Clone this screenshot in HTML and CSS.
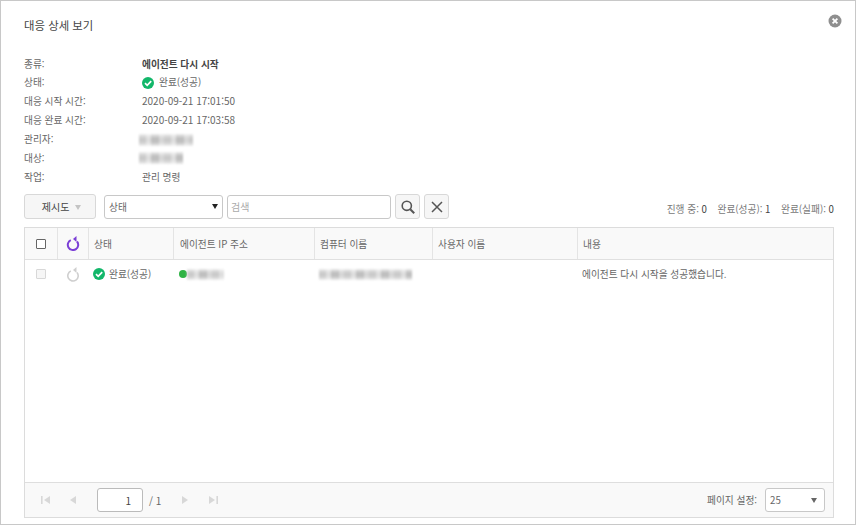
FILE: index.html
```html
<!DOCTYPE html>
<html lang="ko">
<head>
  <meta charset="UTF-8" />
  <title>대응 상세 보기</title>
  <link rel="stylesheet" href="styles.css">
</head>
<body>
  <div class="dialog">
    <header class="dialog-head">
      <h1>대응 상세 보기</h1>
      <button class="close-btn" aria-label="닫기">
        <svg width="14" height="14" viewBox="0 0 14 14"><circle cx="7" cy="7" r="6.5" fill="#8f8f8f"/><path d="M4.6 4.6l4.8 4.8M9.4 4.6l-4.8 4.8" stroke="#fff" stroke-width="1.8"/></svg>
      </button>
    </header>

    <dl class="details">
      <dt>종류:</dt><dd class="strong">에이전트 다시 시작</dd>
      <dt>상태:</dt>
      <dd class="status-big">
        <svg width="12" height="12" viewBox="0 0 12 12"><circle cx="6" cy="6" r="6" fill="#12b76a"/><path d="M3 6.2l2.2 2.2L9.2 4.2" fill="none" stroke="#fff" stroke-width="1.7"/></svg>
        완료(성공)
      </dd>
      <dt>대응 시작 시간:</dt><dd class="num">2020-09-21 17:01:50</dd>
      <dt>대응 완료 시간:</dt><dd class="num">2020-09-21 17:03:58</dd>
      <dt>관리자:</dt><dd><span class="mosaic mosaic-admin"></span></dd>
      <dt>대상:</dt><dd><span class="mosaic mosaic-target"></span></dd>
      <dt>작업:</dt><dd>관리 명령</dd>
    </dl>

    <div class="toolbar">
      <button class="btn-retry">제시도 <i class="caret caret-light"></i></button>
      <div class="select select-status">상태<i class="caret"></i></div>
      <input class="search" type="text" placeholder="검색" />
      <button class="btn-icon" aria-label="검색">
        <svg width="16" height="16" viewBox="0 0 16 16"><circle cx="6.8" cy="6.8" r="4.6" fill="none" stroke="#555" stroke-width="1.6"/><path d="M10.2 10.2l4 4" stroke="#555" stroke-width="2"/></svg>
      </button>
      <button class="btn-icon" aria-label="지우기">
        <svg width="14" height="14" viewBox="0 0 14 14"><path d="M2 2l10 10M12 2L2 12" stroke="#555" stroke-width="1.5"/></svg>
      </button>
      <div class="counts">
        <span>진행 중: <b>0</b></span>
        <span>완료(성공): <b>1</b></span>
        <span>완료(실패): <b>0</b></span>
      </div>
    </div>

    <section class="grid">
      <div class="row row-head">
        <div class="cell c-check"><span class="checkbox"></span></div>
        <div class="cell c-icon">
          <svg width="14" height="15" viewBox="0 0 14 15"><path d="M11 5.5A5.2 5.2 0 1 1 4.8 4.1" fill="none" stroke="#7b3fd6" stroke-width="2"/><path d="M10.5 0v6L7 3z" fill="#7b3fd6"/></svg>
        </div>
        <div class="cell c-status">상태</div>
        <div class="cell c-ip">에이전트 IP 주소</div>
        <div class="cell c-pc">컴퓨터 이름</div>
        <div class="cell c-user">사용자 이름</div>
        <div class="cell c-text">내용</div>
      </div>
      <div class="row row-body">
        <div class="cell c-check"><span class="checkbox off"></span></div>
        <div class="cell c-icon">
          <svg width="14" height="15" viewBox="0 0 14 15"><path d="M11 5.5A5.2 5.2 0 1 1 4.8 4.1" fill="none" stroke="#cfcfcf" stroke-width="1.6"/><path d="M10.5 0v6L7 3z" fill="#cfcfcf"/></svg>
        </div>
        <div class="cell c-status status-small">
          <svg width="12" height="12" viewBox="0 0 12 12"><circle cx="6" cy="6" r="6" fill="#12b76a"/><path d="M3 6.2l2.2 2.2L9.2 4.2" fill="none" stroke="#fff" stroke-width="1.7"/></svg>
          완료(성공)
        </div>
        <div class="cell c-ip"><i class="dot"></i><span class="mosaic mosaic-ip"></span></div>
        <div class="cell c-pc"><span class="mosaic mosaic-pc"></span></div>
        <div class="cell c-user"></div>
        <div class="cell c-text">에이전트 다시 시작을 성공했습니다.</div>
      </div>
      <div class="spacer"></div>
      <footer class="pager">
        <div class="pager-nav">
          <svg width="9" height="8" viewBox="0 0 9 8"><path d="M0 0h1.6v8H0zM9 0v8L3 4z" fill="#d8d8d8"/></svg>
          <svg class="nav-prev" width="6" height="8" viewBox="0 0 6 8"><path d="M6 0v8L0 4z" fill="#d8d8d8"/></svg>
          <input class="page-input" type="text" value="1" />
          <span class="page-total">/ 1</span>
          <svg class="nav-next" width="6" height="8" viewBox="0 0 6 8"><path d="M0 0v8l6-4z" fill="#d8d8d8"/></svg>
          <svg class="nav-last" width="9" height="8" viewBox="0 0 9 8"><path d="M0 0v8l6-4zM7.4 0H9v8H7.4z" fill="#d8d8d8"/></svg>
        </div>
        <div class="pager-size">
          <span>페이지 설정:</span>
          <div class="select select-size">25<i class="caret caret-mid"></i></div>
        </div>
      </footer>
    </section>
  </div>
</body>
</html>
```
FILE: styles.css
```css
html, body {
  margin: 0;
  height: 100%;
}
body {
  font-family: "Noto Sans CJK KR", "Noto Sans", sans-serif;
  font-size: 9.7px;
  color: #666;
  background-color: #fff;
}
.dialog {
  box-sizing: border-box;
  width: 856px;
  height: 525px;
  border: 1px solid #c8c8c8;
  padding: 0 21px 6px 23px;
  display: flex;
  flex-direction: column;
}
.dialog-head {
  display: flex;
  justify-content: space-between;
  align-items: flex-start;
  height: 53.5px;
  margin-right: -8px;
}
.dialog-head h1 {
  margin: 16px 0 0;
  font-size: 11.4px;
  line-height: 17px;
  font-weight: 400;
  color: #444;
}
.close-btn {
  margin-top: 13px;
  padding: 0;
  border: none;
  background: none;
  height: 14px;
}
.details {
  margin: 0;
  display: grid;
  grid-template-columns: 118px 1fr;
  grid-auto-rows: 18.9px;
  line-height: 18.9px;
  height: 136.5px;
}
.details dt,
.details dd {
  margin: 0;
  display: flex;
  align-items: center;
}
.details .strong {
  font-weight: 700;
  font-size: 9.7px;
  color: #444;
}
.details .num {
  font-size: 10px;
}
.status-big svg {
  margin-right: 5px;
}
.mosaic {
  display: inline-block;
  filter: blur(0.8px);
  background-image:
    linear-gradient(rgba(255,255,255,0.7), rgba(255,255,255,0) 35% 65%, rgba(255,255,255,0.7)),
    repeating-linear-gradient(90deg, #cacaca 0 7px, #dedede 7px 12px, #bebebe 12px 20px, #d6d6d6 20px 25px);
}
.mosaic-admin {
  width: 54px;
  height: 12px;
  margin-left: -3px;
}
.mosaic-target {
  width: 44px;
  height: 12px;
  margin-left: -3px;
}
.mosaic-ip {
  width: 37px;
  height: 11px;
}
.mosaic-pc {
  width: 93px;
  height: 11px;
  margin-left: 0;
}
.toolbar {
  display: flex;
  align-items: center;
  height: 25px;
  margin-top: 3px;
}
.toolbar button {
  font-family: inherit;
  box-sizing: border-box;
  height: 25px;
  border: 1px solid #d8d8d8;
  border-radius: 3px;
  background-color: #f6f6f6;
  color: #444;
  padding: 0;
}
.toolbar .btn-retry {
  width: 72px;
  font-size: 10px;
  margin-right: 8px;
  padding-left: 3px;
}
.caret {
  display: inline-block;
  width: 0;
  height: 0;
  border-left: 3.5px solid transparent;
  border-right: 3.5px solid transparent;
  border-top: 5px solid #222;
}
.caret-light {
  border-top-color: #c4c4c4;
  margin-left: 3px;
  vertical-align: 1px;
}
.caret-mid {
  border-top-color: #666;
}
.select {
  box-sizing: border-box;
  display: flex;
  justify-content: space-between;
  align-items: center;
  height: 24px;
  border: 1px solid #c8c8c8;
  border-radius: 3px;
  background-color: #fff;
  padding: 0 4px;
}
.select-status {
  width: 119px;
  margin-right: 4px;
}
.search {
  box-sizing: border-box;
  width: 164px;
  height: 24px;
  border: 1px solid #c8c8c8;
  border-radius: 3px;
  padding: 0 3px;
  font-family: inherit;
  font-size: 10px;
  margin-right: 4px;
}
.search::placeholder {
  color: #aaa;
}
.btn-icon {
  width: 25px;
  margin-right: 4px;
  display: flex;
  align-items: center;
  justify-content: center;
}
.counts {
  margin-left: auto;
  display: flex;
  gap: 10.5px;
  color: #777;
  padding-top: 5px;
}
.counts b {
  font-weight: 400;
  color: #444;
}
.grid {
  margin-top: 8px;
  flex: 1;
  border: 1px solid #dcdcdc;
  display: flex;
  flex-direction: column;
}
.row {
  display: flex;
}
.row-head {
  height: 31px;
  background-color: #f9f9f9;
  border-bottom: 1px solid #e0e0e0;
}
.row-body {
  height: 28px;
}
.cell {
  box-sizing: border-box;
  display: flex;
  align-items: center;
  padding-left: 5px;
}
.row-head .cell + .cell {
  border-left: 1px solid #e4e4e4;
}
.c-check {
  width: 32px;
  justify-content: center;
  padding-left: 0;
}
.c-icon {
  width: 31px;
  justify-content: center;
  padding-left: 0;
}
.c-status {
  width: 85px;
}
.c-ip {
  width: 141px;
  padding-left: 6px;
}
.c-pc {
  width: 118px;
}
.c-user {
  width: 145px;
}
.c-text {
  flex: 1;
}
.checkbox {
  box-sizing: border-box;
  width: 10px;
  height: 10px;
  border: 1px solid #666;
  border-radius: 1px;
  background-color: #fff;
}
.checkbox.off {
  border-color: #d8d8d8;
  background-color: #f6f6f6;
}
.status-small svg {
  margin-right: 4px;
}
.dot {
  width: 8px;
  height: 8px;
  border-radius: 50%;
  background-color: #2fb344;
}
.spacer {
  flex: 1;
}
.pager {
  height: 34px;
  border-top: 1px solid #dedede;
  background-color: #f9f9f9;
  display: flex;
  justify-content: space-between;
  align-items: center;
  padding: 0 8px 0 16px;
}
.pager-nav,
.pager-size {
  display: flex;
  align-items: center;
}
.nav-prev {
  margin-left: 20px;
  margin-right: 21px;
}
.page-input {
  box-sizing: border-box;
  width: 46px;
  height: 24px;
  border: 1px solid #bbb;
  border-radius: 3px;
  text-align: right;
  padding: 0 11px 0 0;
  font-family: inherit;
  font-size: 10px;
  color: #444;
}
.page-total {
  margin-left: 6px;
  font-size: 10px;
}
.nav-next {
  margin-left: 21px;
}
.nav-last {
  margin-left: 21px;
}
.pager-size span {
  margin-right: 8px;
}
.select-size {
  width: 60px;
  padding: 0 7px 0 4px;
}
```
